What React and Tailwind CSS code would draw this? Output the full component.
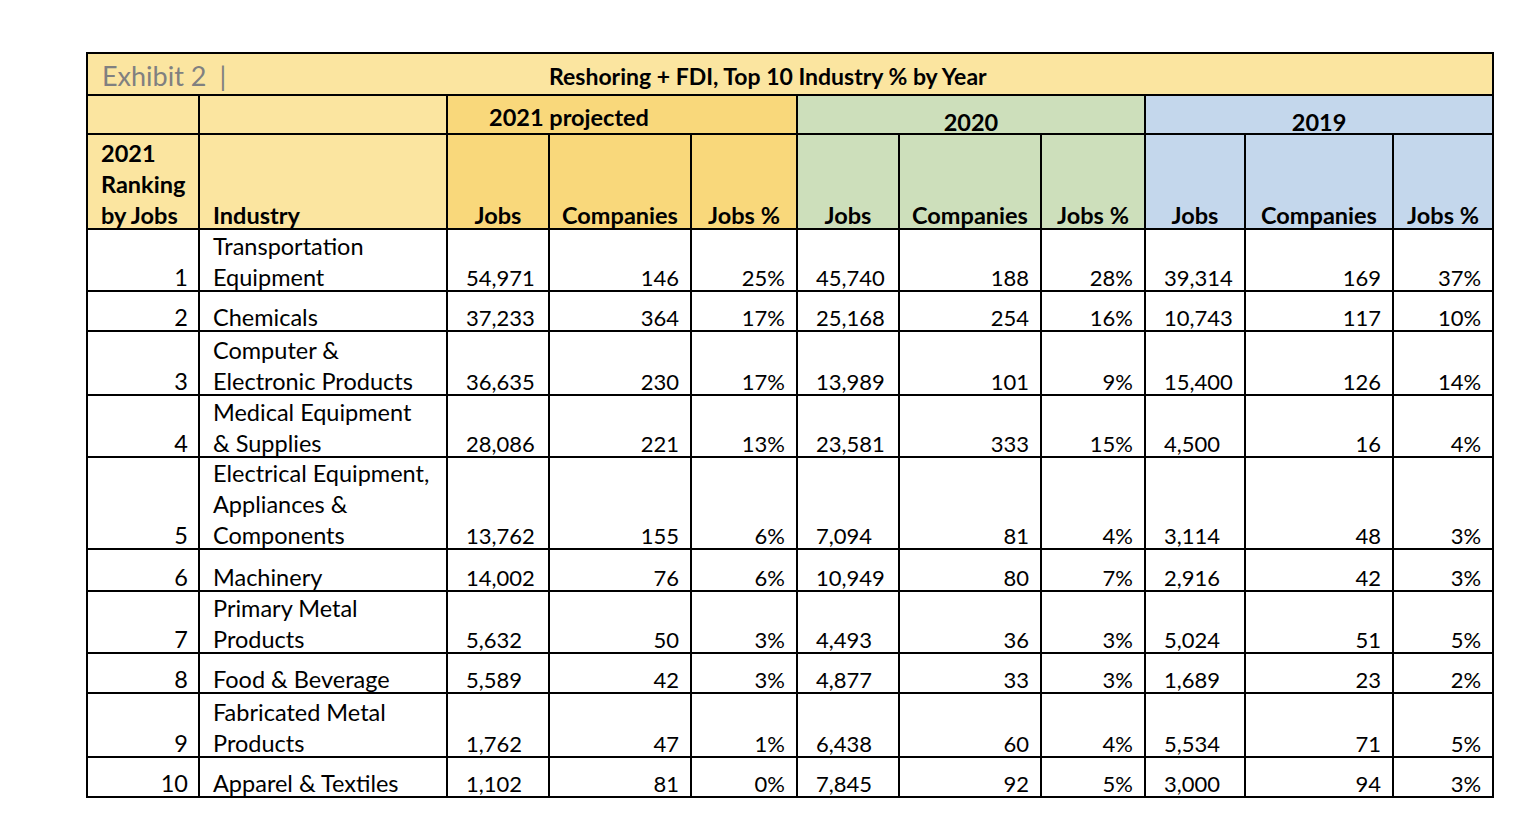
const LIGHT = "bg-[#fbe5a0]";

const rows = [
  { rank: 1, name: ["Transportation", "Equipment"], h: "h-[62px]", v: ["54,971", "146", "25%", "45,740", "188", "28%", "39,314", "169", "37%"] },
  { rank: 2, name: ["Chemicals"], h: "h-[40px]", v: ["37,233", "364", "17%", "25,168", "254", "16%", "10,743", "117", "10%"] },
  { rank: 3, name: ["Computer &", "Electronic Products"], h: "h-[64px]", v: ["36,635", "230", "17%", "13,989", "101", "9%", "15,400", "126", "14%"] },
  { rank: 4, name: ["Medical Equipment", "& Supplies"], h: "h-[62px]", v: ["28,086", "221", "13%", "23,581", "333", "15%", "4,500", "16", "4%"] },
  { rank: 5, name: ["Electrical Equipment,", "Appliances &", "Components"], h: "h-[92px]", v: ["13,762", "155", "6%", "7,094", "81", "4%", "3,114", "48", "3%"] },
  { rank: 6, name: ["Machinery"], h: "h-[42px]", v: ["14,002", "76", "6%", "10,949", "80", "7%", "2,916", "42", "3%"] },
  { rank: 7, name: ["Primary Metal", "Products"], h: "h-[62px]", v: ["5,632", "50", "3%", "4,493", "36", "3%", "5,024", "51", "5%"] },
  { rank: 8, name: ["Food & Beverage"], h: "h-[40px]", v: ["5,589", "42", "3%", "4,877", "33", "3%", "1,689", "23", "2%"] },
  { rank: 9, name: ["Fabricated Metal", "Products"], h: "h-[64px]", v: ["1,762", "47", "1%", "6,438", "60", "4%", "5,534", "71", "5%"] },
  { rank: 10, name: ["Apparel & Textiles"], h: "h-[40px]", v: ["1,102", "81", "0%", "7,845", "92", "5%", "3,000", "94", "3%"] },
];

const groups = ["bg-[#f9d87b]", "bg-[#cddfbb]", "bg-[#c4d7ec]"];

const cell = "border-2 border-black align-bottom leading-[30px] p-0";

function Low({ children, className = "" }) {
  return <div className={`leading-[31px] -mb-[3px] ${className}`}>{children}</div>;
}

export default function App() {
  return (
    <div className="min-h-screen bg-white pt-[52px] pl-[86px]" style={{ fontFamily: "Lato, 'Open Sans', sans-serif" }}>
      <table className="table-fixed border-collapse border-2 border-black text-[23.5px] text-black w-[1408px]">
        <colgroup>
          <col className="w-[112px]" />
          <col className="w-[248px]" />
          <col className="w-[102px]" />
          <col className="w-[142px]" />
          <col className="w-[106px]" />
          <col className="w-[102px]" />
          <col className="w-[142px]" />
          <col className="w-[104px]" />
          <col className="w-[100px]" />
          <col className="w-[148px]" />
          <col className="w-[100px]" />
        </colgroup>
        <tbody>
          <tr className="h-[42px]">
            <td colSpan={11} className={`${LIGHT} border-2 border-black pl-[14px] pt-[3px] align-middle leading-[32px]`}>
              <div className="flex items-center">
                <span className="w-[447px] text-[27px] text-[#808080]">
                  Exhibit 2<span className="ml-[13px]">|</span>
                </span>
                <span className="font-bold text-[23px]">Reshoring + FDI, Top 10 Industry % by Year</span>
              </div>
            </td>
          </tr>
          <tr className="h-[39px] font-bold">
            <td className={`${LIGHT} border-2 border-black`} />
            <td className={`${LIGHT} border-2 border-black`} />
            <td colSpan={3} className={`${groups[0]} ${cell} text-center pr-[106px] pb-[1px]`}>2021 projected</td>
            <td colSpan={3} className={`${groups[1]} ${cell} text-center`}>
              <div className="-mb-[4px]">2020</div>
            </td>
            <td colSpan={3} className={`${groups[2]} ${cell} text-center`}>
              <div className="-mb-[4px]">2019</div>
            </td>
          </tr>
          <tr className="h-[95px] font-bold">
            <td className={`${LIGHT} ${cell} pl-[13px]`}>
              <Low className="-mb-[1px]">2021<br />Ranking<br />by Jobs</Low>
            </td>
            <td className={`${LIGHT} ${cell} pl-[13px]`}>
              <Low className="-mb-[1px]">Industry</Low>
            </td>
            {groups.map((g, i) => (
              <Heads key={i} bg={g} />
            ))}
          </tr>
          {rows.map((r) => (
            <tr key={r.rank} className={r.h}>
              <td className={`${cell} text-right pr-[10px]`}>
                <Low>{r.rank}</Low>
              </td>
              <td className={`${cell} pl-[13px]`}>
                <Low>
                  {r.name.map((l, i) => (
                    <div key={i} className="whitespace-nowrap">{l}</div>
                  ))}
                </Low>
              </td>
              {r.v.map((val, i) => (
                <td key={i} className={`${cell} text-[22px] ${i % 3 === 0 ? "text-left pl-[18px]" : "text-right pr-[11px]"}`}>
                  <Low>{val}</Low>
                </td>
              ))}
            </tr>
          ))}
        </tbody>
      </table>
    </div>
  );
}

function Heads({ bg }) {
  return (
    <>
      <td className={`${bg} ${cell} text-center`}><Low className="-mb-[1px]">Jobs</Low></td>
      <td className={`${bg} ${cell} text-center`}><Low className="-mb-[1px]">Companies</Low></td>
      <td className={`${bg} ${cell} text-center`}><Low className="-mb-[1px]">Jobs %</Low></td>
    </>
  );
}
